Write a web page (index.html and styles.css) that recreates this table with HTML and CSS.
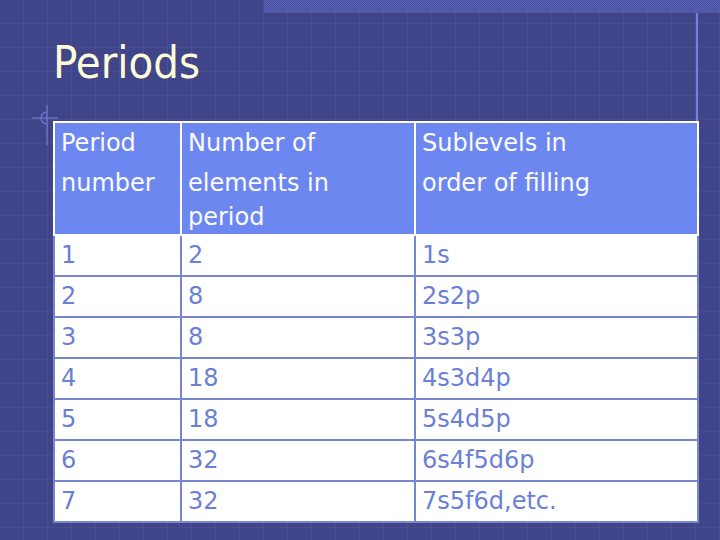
FILE: index.html
```html
<!DOCTYPE html>
<html>
<head>
<meta charset="utf-8">
<link rel="stylesheet" href="styles.css">
</head>
<body>
<div class="strip"></div>
<h1 class="title">Periods</h1>
<svg class="cross" width="30" height="40" viewBox="0 0 30 40">
  <line x1="2" y1="13" x2="28" y2="13" />
  <line x1="17" y1="0" x2="17" y2="40" />
  <path d="M17 7 A6 6 0 0 0 17 19" fill="none" />
</svg>
<table class="periods">
  <colgroup>
    <col class="c1"><col class="c2"><col class="c3">
  </colgroup>
  <thead>
    <tr>
      <th><div class="l1">Period</div><div class="l2">number</div></th>
      <th><div class="l1">Number of</div><div class="l2">elements in</div><div class="l3">period</div></th>
      <th><div class="l1">Sublevels in</div><div class="l2">order of filling</div></th>
    </tr>
  </thead>
  <tbody>
    <tr><td>1</td><td>2</td><td>1s</td></tr>
    <tr><td>2</td><td>8</td><td>2s2p</td></tr>
    <tr><td>3</td><td>8</td><td>3s3p</td></tr>
    <tr><td>4</td><td>18</td><td>4s3d4p</td></tr>
    <tr><td>5</td><td>18</td><td>5s4d5p</td></tr>
    <tr><td>6</td><td>32</td><td>6s4f5d6p</td></tr>
    <tr><td>7</td><td>32</td><td>7s5f6d,etc.</td></tr>
  </tbody>
</table>
</body>
</html>
```
FILE: styles.css
```css
html, body {
  margin: 0;
  padding: 0;
}
body {
  width: 720px;
  height: 540px;
  overflow: hidden;
  position: relative;
  font-family: "DejaVu Sans", Verdana, sans-serif;
  background-color: #404489;
  background-image:
    linear-gradient(#7483e2, #7483e2),
    repeating-linear-gradient(90deg, transparent 0 23px, rgba(120, 130, 210, 0.16) 23px 24px),
    repeating-linear-gradient(180deg, transparent 0 23px, rgba(120, 130, 210, 0.12) 23px 24px);
  background-repeat: no-repeat, repeat, repeat;
  background-position: 696px 0, 0 0, 0 0;
  background-size: 2px 122px, auto, auto;
}
.strip {
  margin-left: 264px;
  height: 13px;
  background-color: #4d55a6;
  background-image: repeating-conic-gradient(#5a63b6 0 25%, #484f9e 0 50%);
  background-size: 2px 2px;
}
.title {
  margin: 25px 0 0 0;
  padding-left: 53px;
  font-family: "DejaVu Sans Condensed", "DejaVu Sans", sans-serif;
  font-weight: normal;
  font-size: 45px;
  line-height: 50px;
  height: 50px;
  color: #fdfbd8;
}
.cross {
  position: absolute;
  left: 30px;
  top: 105px;
  stroke: #6f7fd0;
  stroke-width: 1.2;
}
.periods {
  margin: 33px 0 0 53px;
  width: 644px;
  table-layout: fixed;
  border-collapse: collapse;
  font-size: 24px;
}
.c1 { width: 127px; }
.c2 { width: 234px; }
.c3 { width: 283px; }
.periods th {
  background: #6d87f0;
  color: #fbfbff;
  border: 2px solid #ffffff;
  font-weight: normal;
  text-align: left;
  vertical-align: top;
  padding: 0 6px;
  height: 111px;
}
.l1, .l2 { line-height: 40px; white-space: nowrap; }
.l3 { line-height: 28px; white-space: nowrap; }
.periods td {
  background: #ffffff;
  color: #6c7fd6;
  border: 2px solid #7787cf;
  padding: 0 6px;
  height: 39px;
  line-height: 39px;
  vertical-align: middle;
}
```
